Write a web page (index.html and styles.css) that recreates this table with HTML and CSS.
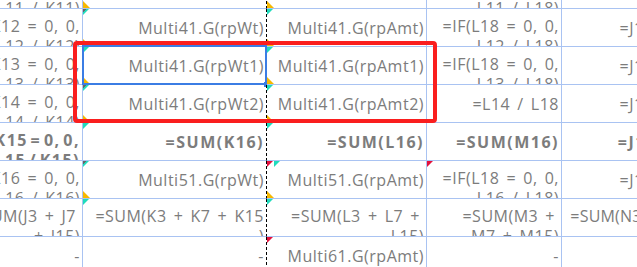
FILE: index.html
```html
<!DOCTYPE html>
<html>
<head>
<meta charset="utf-8">
<link rel="stylesheet" href="styles.css">
</head>
<body>
<div class="page">
  <div class="sheet">
    <!-- row 10 (partially visible) -->
    <div class="c w"><span>=IF(K11 = 0, 0,<br>L11 / K11)</span></div>
    <div class="c k"><i class="y"></i></div>
    <div class="c"><i class="y"></i></div>
    <div class="c w"><span>=IF(L18 = 0, 0,<br>L11 / L18)</span></div>
    <div class="c"><span>=J11 / J18</span></div>

    <!-- row 11 -->
    <div class="c w"><span>=IF(K12 = 0, 0,<br>L12 / K12)</span></div>
    <div class="c k"><i class="g d"></i><i class="y"></i><span>Multi41.G(rpWt)</span></div>
    <div class="c"><i class="g"></i><i class="y"></i><span>Multi41.G(rpAmt)</span></div>
    <div class="c w"><span>=IF(L18 = 0, 0,<br>L12 / L18)</span></div>
    <div class="c"><span>=J12 / J18</span></div>

    <!-- row 12 -->
    <div class="c w"><span>=IF(K13 = 0, 0,<br>L13 / K13)</span></div>
    <div class="c k selc"><i class="g"></i><i class="y"></i><span>Multi41.G(rpWt1)</span><b class="sel"><b class="handle"></b></b></div>
    <div class="c"><i class="g"></i><i class="y"></i><span>Multi41.G(rpAmt1)</span></div>
    <div class="c w"><span>=IF(L18 = 0, 0,<br>L13 / L18)</span></div>
    <div class="c"><span>=J13 / J18</span></div>

    <!-- row 13 -->
    <div class="c w"><span>=IF(K14 = 0, 0,<br>L14 / K14)</span></div>
    <div class="c k"><i class="g d"></i><i class="y"></i><span>Multi41.G(rpWt2)</span></div>
    <div class="c"><i class="g"></i><i class="y"></i><span>Multi41.G(rpAmt2)</span></div>
    <div class="c"><span>=L14 / L18</span></div>
    <div class="c"><span>=J14 / J18</span></div>

    <!-- row 14 (totals) -->
    <div class="c w bold"><span>=IF(K15 = 0, 0,<br>L15 / K15)</span></div>
    <div class="c k bold"><i class="g"></i><span>=SUM(K16)</span></div>
    <div class="c bold"><i class="g"></i><span>=SUM(L16)</span></div>
    <div class="c bold"><span>=SUM(M16)</span></div>
    <div class="c bold"><span>=J15 / J18</span></div>

    <!-- row 15 -->
    <div class="c w"><span>=IF(K16 = 0, 0,<br>L16 / K16)</span></div>
    <div class="c k"><i class="g d"></i><i class="y"></i><span>Multi51.G(rpWt)</span></div>
    <div class="c"><i class="r"></i><i class="g shift"></i><i class="y"></i><span>Multi51.G(rpAmt)</span></div>
    <div class="c w"><i class="r"></i><span>=IF(L18 = 0, 0,<br>L16 / L18)</span></div>
    <div class="c"><span>=J16 / J18</span></div>

    <!-- row 16 -->
    <div class="c w"><span>=SUM(J3 + J7<i class="sp"></i><br>+ J15)</span></div>
    <div class="c k w"><i class="g"></i><span>=SUM(K3 + K7 + K15<br>)</span></div>
    <div class="c w"><i class="g"></i><span>=SUM(L3 + L7 +<i class="sp"></i><br>L15)</span></div>
    <div class="c w"><span>=SUM(M3 +<i class="sp"></i><br>M7 + M15)</span></div>
    <div class="c w tight"><span>=SUM(N3 + N7 +<br>N15)</span></div>

    <!-- row 17 -->
    <div class="c"><span>-</span></div>
    <div class="c k"><span>-</span></div>
    <div class="c"><i class="r"></i><span>Multi61.G(rpAmt)</span></div>
    <div class="c"><span>-</span></div>
    <div class="c"><span></span></div>
  </div>
  <div class="mark"></div>
</div>
</body>
</html>
```

FILE: styles.css
```css
html, body {
  margin: 0;
  padding: 0;
  background: #ffffff;
  overflow: hidden;
}

.page {
  position: relative;
  width: 637px;
  height: 267px;
  overflow: hidden;
}

.sheet {
  display: grid;
  grid-template-columns: 136px 184px 160px 135px 139px;
  grid-auto-rows: 38px;
  margin: -29px 0 0 -53px;
  font-family: "Open Sans", "Noto Sans", sans-serif;
  font-size: 16px;
  letter-spacing: 0.5px;
  word-spacing: 2.5px;
  color: #7c7c7c;
}

.c {
  position: relative;
  display: flex;
  align-items: center;
  justify-content: flex-end;
  padding: 0 2px 0 0;
  border-right: 1px solid #a9c3f2;
  border-bottom: 1px solid #a9c3f2;
  overflow: hidden;
  white-space: nowrap;
  line-height: 20px;
  text-align: right;
}

.c.k {
  border-right: 1px dashed #000000;
}

.c.selc {
  overflow: visible;
}

.c.w {
  align-items: flex-start;
  padding-top: 7px;
}

.c.tight {
  letter-spacing: 0.2px;
  word-spacing: 1px;
}

.bold {
  font-weight: 700;
  letter-spacing: 1.5px;
  word-spacing: -3px;
}

/* trailing space kept by wrapped lines */
.sp {
  display: inline-block;
  width: 4px;
}

/* cell indicator triangles */
.g, .y, .r {
  position: absolute;
  left: 0;
  display: block;
}

.g {
  top: 0;
  width: 6px;
  height: 6px;
  background: #1fdcbc;
  clip-path: polygon(0 0, 100% 0, 0 100%);
}

.g.d {
  background: linear-gradient(135deg, #666666 0 30%, #1fdcbc 30% 100%);
}

.g.shift {
  left: 7px;
}

.y {
  bottom: 0;
  width: 7px;
  height: 7px;
  background: #f7b800;
  clip-path: polygon(0 0, 100% 100%, 0 100%);
}

.r {
  top: 0;
  width: 6px;
  height: 6px;
  background: #e4103c;
  clip-path: polygon(0 0, 100% 0, 0 100%);
}

/* selected cell */
.sel {
  position: absolute;
  top: -2px;
  left: -1px;
  right: -1px;
  bottom: -1px;
  border: 2px solid #3b7de4;
  pointer-events: none;
}

.handle {
  position: absolute;
  right: -4px;
  bottom: -4px;
  width: 5px;
  height: 5px;
  background: #3b7de4;
}

/* red annotation frame */
.mark {
  position: absolute;
  left: 73px;
  top: 41px;
  width: 356px;
  height: 74px;
  border: 4px solid #fa1e1e;
  border-radius: 4px;
}
```
